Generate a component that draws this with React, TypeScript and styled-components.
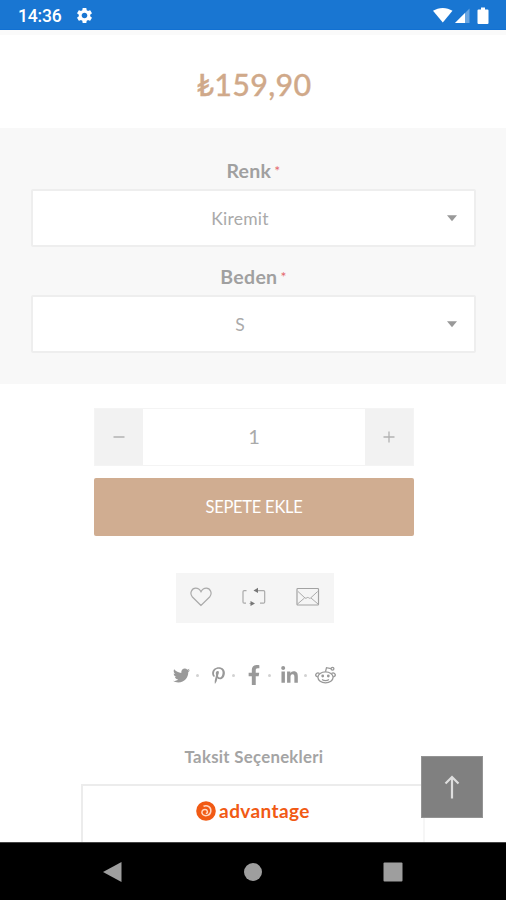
import React from 'react';
import styled, { createGlobalStyle } from 'styled-components';
import { MdSettings } from 'react-icons/md';
import { FaTwitter, FaPinterestP, FaFacebookF, FaLinkedinIn } from 'react-icons/fa';

const GlobalStyle = createGlobalStyle`
  * { box-sizing: border-box; }
  body { margin: 0; background: #fff; font-family: Lato, sans-serif; }
  button { font-family: inherit; border: 0; padding: 0; margin: 0; }
  svg { display: block; flex: none; }
`;

const Screen = styled.div`
  position: relative;
  width: 506px;
  height: 900px;
  overflow: hidden;
  display: flex;
  flex-direction: column;
  background: #fff;
`;

const StatusBar = styled.header`
  height: 30px;
  flex: none;
  display: flex;
  align-items: center;
  justify-content: space-between;
  padding: 2px 15px 0 18px;
  background: #1976d2;
  border-bottom: 1px solid #1170d2;
  color: #fff;
`;

const StatusGroup = styled.div<{ $gap: number }>`
  display: flex;
  align-items: center;
  gap: ${(p) => p.$gap}px;
`;

const Clock = styled.span`
  font: 500 17.5px/20px Roboto, sans-serif;
  letter-spacing: -0.15px;
`;

const Content = styled.main`
  height: 812px;
  flex: none;
  overflow: hidden;
  display: flex;
  flex-direction: column;
  align-items: center;
`;

const PriceRow = styled.div`
  width: 100%;
  height: 98px;
  flex: none;
  padding: 33px 0 0 2px;
  border-top: 5px solid #fafafa;
  text-align: center;
  color: #d0a98a;
  font-size: 30.5px;
  line-height: 32px;
  font-weight: 500;
  letter-spacing: 0.3px;
  -webkit-text-stroke: 0.3px #d0a98a;
`;

const Options = styled.section`
  width: 100%;
  height: 256px;
  flex: none;
  display: flex;
  flex-direction: column;
  gap: 12px;
  padding: 25px 30px 0 31px;
  background: #f8f8f8;
`;

const Field = styled.div`
  display: flex;
  flex-direction: column;
`;

const Label = styled.label`
  height: 36px;
  display: flex;
  justify-content: center;
  gap: 3px;
  font-size: 19.5px;
  line-height: 36px;
  font-weight: 700;
  letter-spacing: 0.3px;
  color: #a0a0a0;
`;

const Required = styled.span`
  font-size: 14px;
  line-height: 36px;
  font-weight: 400;
  color: #e4686c;
`;

const SelectBox = styled.div`
  height: 58px;
  display: flex;
  align-items: center;
  padding-right: 17px;
  background: #fff;
  border: 2px solid #eee;
  border-radius: 2px;
`;

const SelectValue = styled.span`
  flex: 1;
  padding: 2px 0 0;
  text-align: center;
  font-size: 17.5px;
  line-height: 24px;
  letter-spacing: 0.25px;
  color: #aaa;
`;

const Quantity = styled.div`
  width: 320px;
  height: 58px;
  flex: none;
  margin: 24px 0 12px 2px;
  display: flex;
  border: 1px solid #f4f4f4;
`;

const StepButton = styled.button`
  width: 48px;
  display: flex;
  align-items: center;
  justify-content: center;
  background: #f2f2f2;
`;

const QuantityValue = styled.div`
  flex: 1;
  text-align: center;
  font-size: 20px;
  line-height: 54px;
  color: #aaa;
`;

const AddButton = styled.button`
  width: 320px;
  height: 58px;
  flex: none;
  margin-left: 2px;
  border-radius: 2px;
  background: #d0ad91;
  color: #fff;
  font-size: 16.5px;
  line-height: 58px;
  letter-spacing: -0.25px;
`;

const Actions = styled.div`
  width: 158px;
  height: 50px;
  flex: none;
  margin: 37px 0 0 3px;
  padding: 0 14px 2px;
  display: flex;
  align-items: center;
  justify-content: space-between;
  background: #f5f5f5;
`;

const Social = styled.nav`
  height: 24px;
  flex: none;
  margin: 40px 0 0 3px;
  display: flex;
  align-items: center;
  color: #999;
`;

const SocialItem = styled.span<{ $w: number }>`
  width: ${(p) => p.$w}px;
  display: flex;
  justify-content: center;
`;

const Dot = styled.span<{ $before: number; $after: number }>`
  width: 3px;
  height: 3px;
  margin: 0 ${(p) => p.$after}px 0 ${(p) => p.$before}px;
  border-radius: 50%;
  background: #d2d2d2;
`;

const Heading = styled.h2`
  margin: 58px 0 15px 2px;
  font-size: 16.8px;
  line-height: 24px;
  font-weight: 700;
  letter-spacing: 0.28px;
  color: #a4a4a4;
`;

const BankCard = styled.div`
  width: 344px;
  height: 100px;
  flex: none;
  padding-top: 15px;
  display: flex;
  align-items: flex-start;
  justify-content: center;
  gap: 3px;
  border: 2px solid #ececec;
  border-right-color: #f6f6f6;
`;

const BankName = styled.span`
  font: 700 19px/19px Lato, sans-serif;
  letter-spacing: 0.4px;
  color: #f15a14;
`;

const ToTop = styled.button`
  position: absolute;
  left: 421px;
  top: 756px;
  width: 62px;
  height: 62px;
  display: flex;
  align-items: center;
  justify-content: center;
  background: #808080;
  border: 1px solid #949494;
`;

const NavBar = styled.footer`
  height: 58px;
  flex: none;
  display: flex;
  align-items: center;
  justify-content: space-between;
  padding: 0 103px 0 102px;
  background: #000;
  border-top: 1px solid #444;
`;

const Caret = () => (
  <svg width="10" height="7" viewBox="0 0 10 7"><path d="M0 .3h10L5 6.2z" fill="#999" /></svg>
);

const SelectField = ({ label, value }: { label: string; value: string }) => (
  <Field>
    <Label>{label}<Required>*</Required></Label>
    <SelectBox><SelectValue>{value}</SelectValue><Caret /></SelectBox>
  </Field>
);

const SignalIcons = () => (
  <svg width="58" height="20" viewBox="0 0 58 20" fill="#fff">
    <path d="M0 4.8C5.500.9 14 .9 19.500 4.800L9.800 16.500z" />
    <path d="M22 17L36.500 2.500V17z" opacity=".35" />
    <path d="M22 17L32 7V17z" />
    <path d="M45.500 3.500H48V1.500h4v2h2.500q1 0 1 1V17q0 1-1 1h-9q-1 0-1-1V4.500q0-1 1-1z" />
  </svg>
);

const HeartIcon = () => (
  <svg width="22" height="20" viewBox="0 0 22 20" fill="none" stroke="#aaa" strokeWidth="1.200">
    <path d="M11 18.500L2.400 10C-.8 6.200 1.700 1.200 5.700 1.200 8.400 1.200 10 2.800 11 4.700 12 2.800 13.600 1.200 16.300 1.200 20.300 1.200 22.800 6.200 19.600 10z" />
  </svg>
);

const CompareIcon = () => (
  <svg width="24" height="20" viewBox="0 0 24 20" fill="none" stroke="#aaa" strokeWidth="1.200">
    <path d="M4.500 3.600H2.200Q1 3.600 1 4.800V15q0 1.200 1.200 1.200H4M7.500 16.500H10M14 3.600h7.500q1.200 0 1.200 1.200V15q0 1.200-1.200 1.200H18" />
    <path d="M16 .8V6l-4.500-2.400zM8.500 13.900v5.200l4.500-2.600z" fill="#777" stroke="none" />
  </svg>
);

const MailIcon = () => (
  <svg width="24" height="20" viewBox="0 0 24 20" fill="none" stroke="#a3a3a3" strokeWidth="1.200">
    <rect x="1" y="1.500" width="21.500" height="16.500" rx=".8" />
    <path d="M2 4.500l7 6.500q1 .8 2-.3.800-.6 1.600 0 1 1.100 2 .3l7-6.500M1.500 17l7-6M22 17l-7-6" strokeWidth=".9" />
  </svg>
);

const RedditIcon = () => (
  <svg width="21" height="18" viewBox="0 0 21 18" fill="none" stroke="#999" strokeWidth="1.300">
    <ellipse cx="10.500" cy="11.300" rx="7.600" ry="5.500" />
    <path d="M10.500 5.600L11.500 1.700l4.500 1M4.500 7.600C2.400 5.700-.3 8.200 1.200 10.200L2.800 11M16.500 7.600c2.100-1.900 4.800.6 3.300 2.600L18.200 11M7 13.500q3.500 2.200 7 0" />
    <circle cx="17.500" cy="2.700" r="1.400" />
    <g fill="#999" stroke="none"><circle cx="7.700" cy="10" r="1.400" /><circle cx="13.300" cy="10" r="1.400" /></g>
  </svg>
);

const AdvantageMark = () => (
  <svg width="20" height="20" viewBox="0 0 20 20" fill="none">
    <circle cx="10" cy="10" r="9.800" fill="#f15a14" />
    <path d="M7.500 5.300C11.500 3.500 15.300 6.500 14.800 10.300 14.300 14.500 9.500 16 6.800 13.500 4.800 11.300 6.300 8.500 9 8.500c2.800 0 3.300 3.500.8 4" stroke="#ffd8c5" strokeWidth="1.500" />
  </svg>
);

export default function App() {
  return (
    <Screen>
      <GlobalStyle />
      <StatusBar>
        <StatusGroup $gap={13}><Clock>14:36</Clock><MdSettings size={19} /></StatusGroup>
        <SignalIcons />
      </StatusBar>
      <Content>
        <PriceRow>₺159,90</PriceRow>
        <Options>
          <SelectField label="Renk" value="Kiremit" />
          <SelectField label="Beden" value="S" />
        </Options>
        <Quantity>
          <StepButton aria-label="Azalt">
            <svg width="12" height="12" viewBox="0 0 12 12"><path d="M.5 6h11" stroke="#b2b2b2" strokeWidth="1.500" /></svg>
          </StepButton>
          <QuantityValue>1</QuantityValue>
          <StepButton aria-label="Artır">
            <svg width="12" height="12" viewBox="0 0 12 12"><path d="M.5 6h11M6 .5v11" stroke="#b2b2b2" strokeWidth="1.300" /></svg>
          </StepButton>
        </Quantity>
        <AddButton>SEPETE EKLE</AddButton>
        <Actions><HeartIcon /><CompareIcon /><MailIcon /></Actions>
        <Social>
          <SocialItem $w={17}><FaTwitter size={17} /></SocialItem>
          <Dot $before={6} $after={12} />
          <SocialItem $w={15}><FaPinterestP size={17} /></SocialItem>
          <Dot $before={6} $after={13} />
          <SocialItem $w={11}><FaFacebookF size={20} /></SocialItem>
          <Dot $before={9} $after={9} />
          <SocialItem $w={18}><FaLinkedinIn size={19} /></SocialItem>
          <Dot $before={6} $after={8} />
          <SocialItem $w={21}><RedditIcon /></SocialItem>
        </Social>
        <Heading>Taksit Seçenekleri</Heading>
        <BankCard><AdvantageMark /><BankName>advantage</BankName></BankCard>
      </Content>
      <ToTop aria-label="Yukarı">
        <svg width="16" height="26" viewBox="0 0 16 26" fill="none" stroke="#dedede" strokeWidth="2.200"><path d="M8 24.500V3M1.500 9.500L8 3l6.500 6.500" /></svg>
      </ToTop>
      <NavBar>
        <svg width="20" height="22" viewBox="0 0 20 22"><path d="M19.500 1v20L1 11z" fill="#9e9e9e" /></svg>
        <svg width="18" height="18" viewBox="0 0 18 18"><circle cx="9" cy="9" r="9" fill="#9e9e9e" /></svg>
        <svg width="20" height="20" viewBox="0 0 20 20"><rect x=".5" y=".5" width="19" height="19" rx="1" fill="#9e9e9e" /></svg>
      </NavBar>
    </Screen>
  );
}
